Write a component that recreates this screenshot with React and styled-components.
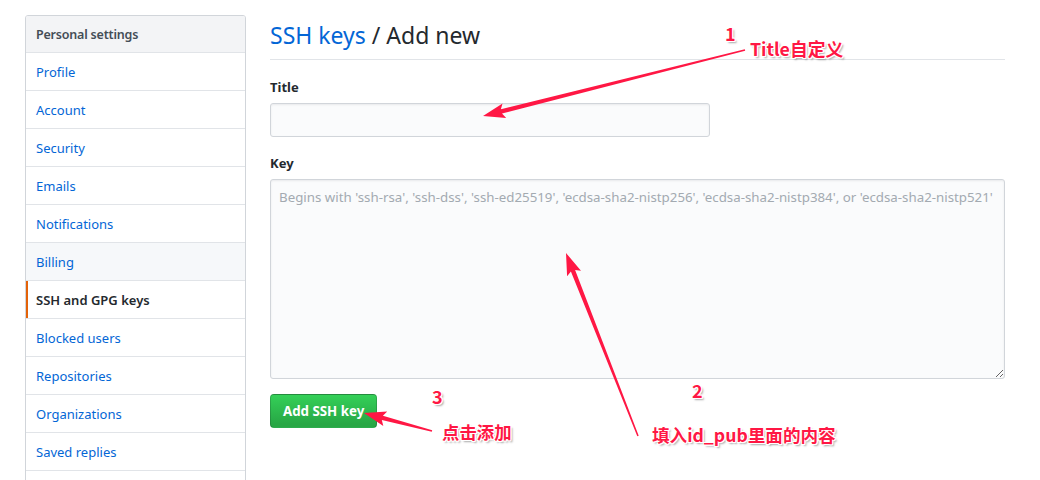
import React from "react";
import styled, { createGlobalStyle } from "styled-components";

const GlobalStyle = createGlobalStyle`
  html, body { margin: 0; padding: 0; background: #fff; }
  body {
    font-family: "Noto Sans", "Liberation Sans", sans-serif;
    font-size: 14px;
    color: #24292e;
  }
  * { box-sizing: border-box; }
`;

const Page = styled.div`
  position: relative;
  display: flex;
  align-items: flex-start;
  gap: 24px;
  padding: 15px 0 0 25px;
  width: 1040px;
  height: 480px;
  overflow: hidden;
`;

const Sidebar = styled.nav`
  flex: 0 0 221px;
  border: 1px solid #d1d5da;
  border-radius: 3px;
  overflow: hidden;
  padding-bottom: 40px;
`;

const MenuHeading = styled.div`
  height: 37px;
  line-height: 36px;
  padding: 1px 10px 0;
  background: #f3f4f6;
  border-bottom: 1px solid #e1e4e8;
  color: #444d56;
  font-size: 12.5px;
  letter-spacing: -0.2px;
  font-weight: 600;
`;

const MenuItem = styled.a`
  position: relative;
  display: block;
  height: 38px;
  line-height: 37px;
  padding: 1px 10px 0;
  border-bottom: 1px solid #e1e4e8;
  text-decoration: none;
  font-size: 13px;
  color: ${(p) => (p.$selected ? "#24292e" : "#0366d6")};
  font-weight: ${(p) => (p.$selected ? 600 : 400)};
  background: ${(p) => (p.$hover ? "#f6f8fa" : "#fff")};
  &::before {
    content: "";
    display: ${(p) => (p.$selected ? "block" : "none")};
    position: absolute;
    left: 0;
    top: 0;
    bottom: 0;
    width: 2px;
    background: #e36209;
  }
`;

const Main = styled.main`
  flex: 0 0 735px;
  display: flex;
  flex-direction: column;
`;

const Subhead = styled.div`
  padding-top: 2px;
  padding-bottom: 6px;
  border-bottom: 1px solid #e1e4e8;
`;

const Heading = styled.h2`
  margin: 0;
  font-size: 23px;
  font-weight: 400;
  line-height: 36px;
  color: #24292e;
`;

const HeadingLink = styled.a`
  color: #0366d6;
  text-decoration: none;
`;

const FormGroup = styled.div`
  display: flex;
  flex-direction: column;
  gap: 5px;
  margin-top: ${(p) => p.$top || "15px"};
`;

const Label = styled.label`
  font-size: 13px;
  font-weight: 700;
  line-height: 21px;
  padding-top: 1px;
  color: #24292e;
`;

const Field = `
  background: #fafbfc;
  border: 1px solid #d1d5da;
  border-radius: 3px;
  box-shadow: inset 0 1px 2px rgba(27, 31, 35, 0.075);
  font-family: "Noto Sans", "Liberation Sans", sans-serif;
  font-size: 13.3px;
  color: #24292e;
  outline: none;
  &::placeholder { color: #a3aab1; }
`;

const TextInput = styled.input`
  ${Field}
  width: 440px;
  height: 34px;
  padding: 6px 8px;
`;

const TextArea = styled.textarea`
  ${Field}
  width: 735px;
  height: 200px;
  padding: 7px 8px;
  line-height: 20px;
  resize: vertical;
`;

const Actions = styled.div`
  margin-top: 15px;
`;

const PrimaryButton = styled.button`
  height: 34px;
  padding: 0 12px;
  border: 1px solid rgba(27, 31, 35, 0.2);
  border-radius: 4px;
  background: linear-gradient(-180deg, #34d058 0%, #28a745 90%);
  color: #fff;
  font-family: "Noto Sans", "Liberation Sans", sans-serif;
  font-size: 13.3px;
  font-weight: 700;
  cursor: pointer;
`;

/* ---------- annotation overlay ---------- */

const Overlay = styled.svg`
  position: absolute;
  left: 0;
  top: 0;
  width: 1040px;
  height: 480px;
  pointer-events: none;
`;

const Note = styled.span`
  position: absolute;
  left: ${(p) => p.$x}px;
  top: ${(p) => p.$y}px;
  font-family: "Noto Sans CJK SC", "Noto Sans", sans-serif;
  font-weight: 700;
  font-size: ${(p) => p.$size || 17}px;
  line-height: 1;
  color: #ff1744;
  white-space: nowrap;
  pointer-events: none;
  text-shadow:
    1px 0 0 #fff, -1px 0 0 #fff, 0 1px 0 #fff, 0 -1px 0 #fff,
    1px 1px 0 #fff, -1px -1px 0 #fff, 1px -1px 0 #fff, -1px 1px 0 #fff,
    2px 2px 2px rgba(0, 0, 0, 0.35);
`;

function arrowPoints(tx, ty, px, py, headLen = 19, headW = 15, w0 = 1.5, w1 = 4.5) {
  const dx = px - tx;
  const dy = py - ty;
  const len = Math.hypot(dx, dy);
  const ux = dx / len;
  const uy = dy / len;
  const nx = -uy;
  const ny = ux;
  const bx = px - ux * headLen;
  const by = py - uy * headLen;
  const barbX = px - ux * (headLen + 3);
  const barbY = py - uy * (headLen + 3);
  const pts = [
    [tx + (nx * w0) / 2, ty + (ny * w0) / 2],
    [bx + (nx * w1) / 2, by + (ny * w1) / 2],
    [barbX + (nx * headW) / 2, barbY + (ny * headW) / 2],
    [px, py],
    [barbX - (nx * headW) / 2, barbY - (ny * headW) / 2],
    [bx - (nx * w1) / 2, by - (ny * w1) / 2],
    [tx - (nx * w0) / 2, ty - (ny * w0) / 2],
  ];
  return pts.map((p) => `${p[0].toFixed(1)},${p[1].toFixed(1)}`).join(" ");
}

const arrows = [
  { t: [745, 50], p: [483, 116] },
  { t: [638, 436], p: [566, 253] },
  { t: [432, 431], p: [364, 413] },
];

const notes = [
  { x: 725, y: 24, text: "1", size: 18 },
  { x: 750, y: 40, text: "Title自定义", size: 17.8 },
  { x: 692, y: 381, text: "2", size: 18 },
  { x: 652, y: 426, text: "填入id_pub里面的内容", size: 17.6 },
  { x: 432, y: 387, text: "3", size: 18 },
  { x: 442, y: 423, text: "点击添加", size: 17.4 },
];

const menu = [
  { label: "Profile" },
  { label: "Account" },
  { label: "Security" },
  { label: "Emails" },
  { label: "Notifications" },
  { label: "Billing", hover: true },
  { label: "SSH and GPG keys", selected: true },
  { label: "Blocked users" },
  { label: "Repositories" },
  { label: "Organizations" },
  { label: "Saved replies" },
];

export default function App() {
  return (
    <>
      <GlobalStyle />
      <Page>
        <Sidebar>
          <MenuHeading>Personal settings</MenuHeading>
          {menu.map((m) => (
            <MenuItem key={m.label} href="#" $selected={m.selected} $hover={m.hover}>
              {m.label}
            </MenuItem>
          ))}
        </Sidebar>
        <Main>
          <Subhead>
            <Heading>
              <HeadingLink href="#">SSH keys</HeadingLink> / Add new
            </Heading>
          </Subhead>
          <FormGroup $top="16px">
            <Label htmlFor="title">Title</Label>
            <TextInput id="title" type="text" />
          </FormGroup>
          <FormGroup>
            <Label htmlFor="key">Key</Label>
            <TextArea
              id="key"
              placeholder="Begins with 'ssh-rsa', 'ssh-dss', 'ssh-ed25519', 'ecdsa-sha2-nistp256', 'ecdsa-sha2-nistp384', or 'ecdsa-sha2-nistp521'"
            />
          </FormGroup>
          <Actions>
            <PrimaryButton type="button">Add SSH key</PrimaryButton>
          </Actions>
        </Main>
        <Overlay viewBox="0 0 1040 480">
          {arrows.map((a, i) => (
            <polygon key={i} points={arrowPoints(a.t[0], a.t[1], a.p[0], a.p[1])} fill="#ff1744" />
          ))}
        </Overlay>
        {notes.map((n) => (
          <Note key={n.text} $x={n.x} $y={n.y} $size={n.size}>
            {n.text}
          </Note>
        ))}
      </Page>
    </>
  );
}
